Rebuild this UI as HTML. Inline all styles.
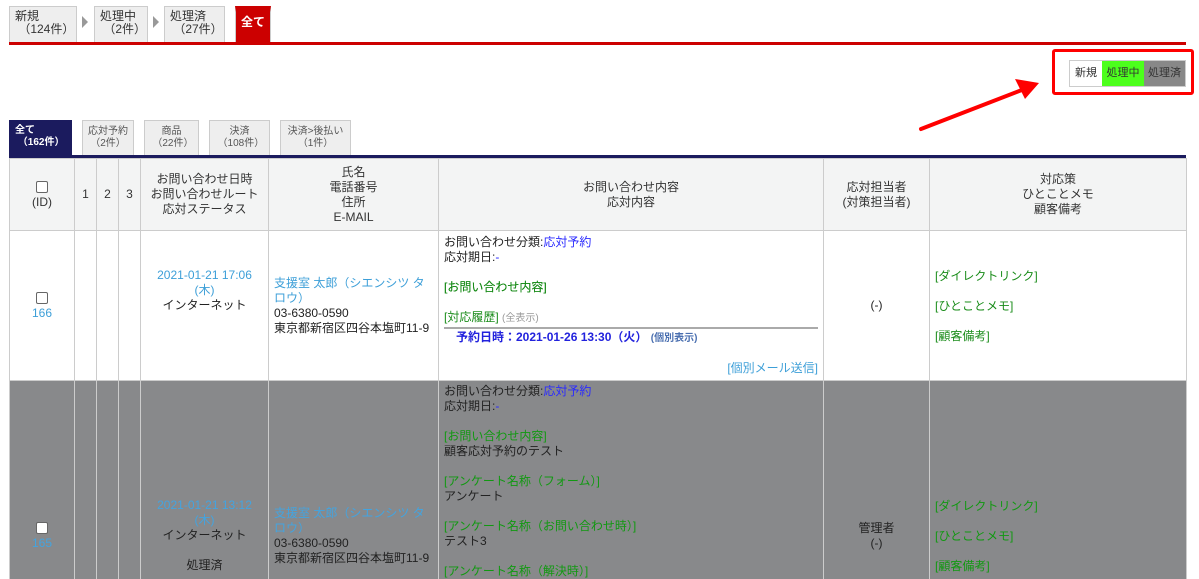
<!DOCTYPE html>
<html style="height:579px;overflow:hidden"><head><meta charset="utf-8">
<style>
*{box-sizing:border-box;margin:0;padding:0}
body{width:1199px;height:579px;overflow:hidden;background:#fff;font-family:"Liberation Sans","Noto Sans CJK JP",sans-serif;font-size:12px;line-height:15px;color:#222;position:relative}
.a{position:absolute}
.tab{position:absolute;background:#eee;border:1px solid #ccc;border-bottom:none;font-size:12px;line-height:13px;padding:3px 0 0 5px;color:#333}
.tab2{position:absolute;background:#eee;border:1px solid #ccc;border-bottom:none;font-size:10px;line-height:12px;color:#555;text-align:center;padding-top:5px}
.tri{position:absolute;width:0;height:0;border-left:6px solid #999;border-top:6px solid transparent;border-bottom:6px solid transparent}
table{position:absolute;left:9px;top:158px;border-collapse:collapse;table-layout:fixed;width:1177px}
td,th{border:1px solid #ccc;font-weight:normal;text-align:center;vertical-align:middle}
th{background:#f3f4f4;color:#333;height:72px}
.cb{display:inline-block;width:12px;height:12px;border:1px solid #666;border-radius:2px;background:#fff;vertical-align:middle}
.lk{color:#3d9fd8}
.g{color:#1a8c1a}
.b{color:#2a2aff}
.c{text-align:left;vertical-align:middle;padding:4px 5px}
.gray td{background:#88898b}
.gray .g{color:#119911}
.gray .lk{color:#43a4e0}
</style></head><body>
<div class="tab" style="left:9px;top:6px;width:68px;height:36px">新規<br>&nbsp;（124件）</div>
<div class="tri" style="left:82px;top:16px"></div>
<div class="tab" style="left:94px;top:6px;width:54px;height:36px">処理中<br>&nbsp;（2件）</div>
<div class="tri" style="left:153px;top:16px"></div>
<div class="tab" style="left:164px;top:6px;width:61px;height:36px">処理済<br>&nbsp;（27件）</div>
<div class="a" style="left:235px;top:6px;width:36px;height:37px;background:#cc0000;border:1px solid #ccc;border-top:6px solid #cc0000;border-bottom:none;color:#fff;font-weight:bold;font-size:12px;padding:3px 0 0 5px">全て</div>
<div class="a" style="left:9px;top:42px;width:1177px;height:3px;background:#cc0000"></div>

<div class="a" style="left:1052px;top:49px;width:142px;height:46px;border:3px solid #f00;border-radius:3px"></div>
<div class="a" style="left:1069px;top:60px;width:117px;height:27px;border:1px solid #ccc;display:flex;font-size:11px;line-height:25px;color:#333">
<div style="width:32px;text-align:center;background:#fff">新規</div>
<div style="width:42px;text-align:center;background:#4cff1c">処理中</div>
<div style="width:41px;text-align:center;background:#888">処理済</div>
</div>
<svg class="a" style="left:915px;top:75px" width="135" height="60"><line x1="6" y1="54" x2="112" y2="13" stroke="#f00" stroke-width="4" stroke-linecap="round"/><polygon points="124,8 100,4 110,24" fill="#f00"/></svg>

<div class="a" style="left:9px;top:120px;width:63px;height:37px;background:#1b1b5e;color:#fff;font-weight:bold;font-size:10px;line-height:12px;padding:5px 0 0 6px">全て<br>&nbsp;（162件）</div>
<div class="tab2" style="left:82px;top:120px;width:52px;height:36px">応対予約<br>（2件）</div>
<div class="tab2" style="left:144px;top:120px;width:55px;height:36px">商品<br>&nbsp;（22件）</div>
<div class="tab2" style="left:209px;top:120px;width:61px;height:36px">決済<br>&nbsp;（108件）</div>
<div class="tab2" style="left:280px;top:120px;width:71px;height:36px">決済&gt;後払い<br>（1件）</div>
<div class="a" style="left:9px;top:155px;width:1177px;height:3px;background:#1b1b5e"></div>

<table>
<colgroup><col style="width:65px"><col style="width:22px"><col style="width:22px"><col style="width:22px"><col style="width:128px"><col style="width:170px"><col style="width:385px"><col style="width:106px"><col style="width:257px"></colgroup>
<tr><th><span class="cb"></span><br>(ID)</th><th>1</th><th>2</th><th>3</th><th>お問い合わせ日時<br>お問い合わせルート<br>応対ステータス</th><th>氏名<br>電話番号<br>住所<br>E-MAIL</th><th>お問い合わせ内容<br>応対内容</th><th>応対担当者<br>(対策担当者)</th><th>対応策<br>ひとことメモ<br>顧客備考</th></tr>
<tr style="height:148px"><td><span class="cb"></span><br><span class="lk">166</span></td><td></td><td></td><td></td>
<td><span class="lk">2021-01-21 17:06<br>(木)</span><br>インターネット<br>&nbsp;<br>&nbsp;</td>
<td class="c" style="padding-top:4px"><span class="lk">支援室 太郎（シエンシツ タロウ）</span><br>03-6380-0590<br>東京都新宿区四谷本塩町11-9</td>
<td class="c">お問い合わせ分類:<span class="b">応対予約</span><br>応対期日:<span class="b">-</span><br>&nbsp;<br><b class="g" style="font-weight:normal;text-shadow:0 0 0 #1a8c1a">[お問い合わせ内容]</b><br>&nbsp;<br><span class="g">[対応履歴]</span> <span style="color:#999;font-size:10px">(全表示)</span><div style="border-top:2px solid #aaa;margin-top:1px;padding:1px 0 0 12px;color:#2222dd;font-weight:bold">予約日時：2021-01-26 13:30（火） <span style="font-size:10px;color:#4a6fb0">(個別表示)</span></div>&nbsp;<div style="text-align:right" class="lk">[個別メール送信]</div></td>
<td>(-)</td>
<td class="c" style="line-height:30px"><span class="g">[ダイレクトリンク]</span><br><span class="g">[ひとことメモ]</span><br><span class="g">[顧客備考]</span></td></tr>
<tr class="gray" style="height:310px"><td><span class="cb"></span><br><span class="lk">165</span></td><td></td><td></td><td></td>
<td><span class="lk">2021-01-21 13:12<br>(木)</span><br>インターネット<br>&nbsp;<br>処理済</td>
<td class="c"><span class="lk">支援室 太郎（シエンシツ タロウ）</span><br>03-6380-0590<br>東京都新宿区四谷本塩町11-9</td>
<td class="c" style="vertical-align:top;padding-top:3px">お問い合わせ分類:<span class="b">応対予約</span><br>応対期日:<span class="b">-</span><br>&nbsp;<br><span class="g">[お問い合わせ内容]</span><br>顧客応対予約のテスト<br>&nbsp;<br><span class="g">[アンケート名称（フォーム）]</span><br>アンケート<br>&nbsp;<br><span class="g">[アンケート名称（お問い合わせ時）]</span><br>テスト3<br>&nbsp;<br><span class="g">[アンケート名称（解決時）]</span><br>&nbsp;</td>
<td>管理者<br>(-)</td>
<td class="c" style="line-height:30px"><span class="g">[ダイレクトリンク]</span><br><span class="g">[ひとことメモ]</span><br><span class="g">[顧客備考]</span></td></tr>
</table>
</body></html>
